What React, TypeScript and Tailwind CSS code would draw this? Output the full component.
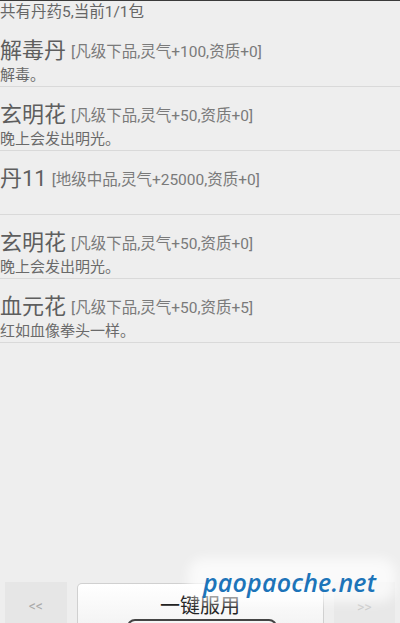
import React from "react";

const items = [
  { name: "解毒丹", info: "[凡级下品,灵气+100,资质+0]", desc: "解毒。" },
  { name: "玄明花", info: "[凡级下品,灵气+50,资质+0]", desc: "晚上会发出明光。" },
  { name: "丹11", info: "[地级中品,灵气+25000,资质+0]", desc: "" },
  { name: "玄明花", info: "[凡级下品,灵气+50,资质+0]", desc: "晚上会发出明光。" },
  { name: "血元花", info: "[凡级下品,灵气+50,资质+5]", desc: "红如血像拳头一样。" },
];

const font = { fontFamily: '"Roboto", "Noto Sans CJK SC", sans-serif' };

export default function App() {
  return (
    <div className="relative w-[400px] h-[623px] overflow-hidden bg-[#eeeeee] flex flex-col" style={font}>
      <div className="h-[1px] bg-[#3a3a3a]" />
      <div className="h-[21px] flex items-center text-[15.5px] leading-none text-[#666] mt-[1px]">
        共有丹药5,当前1/1包
      </div>
      <div className="flex flex-col">
        {items.map((it, i) => (
          <div key={i} className="h-[64px] border-b border-[#d9d9d9] flex flex-col">
            <div className="mt-[14px] h-[28px] flex items-center whitespace-nowrap">
              <span className="text-[22px] leading-none text-[#5e5e5e]">{it.name}</span>
              <span className="ml-[5px] text-[15.5px] leading-none text-[#7a7a7a] mt-[3px]">{it.info}</span>
            </div>
            <div className="h-[18px] flex items-center text-[15px] leading-none text-[#6a6a6a] mt-[1px]">{it.desc}</div>
          </div>
        ))}
      </div>
      <div className="flex-1" />
      <div className="h-[41px] flex items-start gap-[10px] px-[5px]">
        <div className="w-[62px] h-[41px] bg-[#e6e6e6] flex items-center justify-center text-[14px] text-[#aaa] pt-[8px]">&lt;&lt;</div>
        <div className="w-[249px] h-[41px] mt-[1px] rounded-tl-[5px] rounded-tr-[3px] border border-b-0 border-[#d0d0d0] bg-gradient-to-b from-white to-[#f4f4f4] flex items-start justify-center pt-[12px] text-[20px] leading-none text-[#222]">
          一键服用
        </div>
        <div className="w-[62px] h-[41px] bg-[#e8e8e8] flex items-center justify-center text-[14px] text-[#c8c8c8] pt-[10px]">&gt;&gt;</div>
      </div>
      <div className="absolute left-[127px] top-[619px] w-[150px] h-[20px] rounded-[8px] border-2 border-[#444] bg-[#f5f5f5]" />
      <div className="absolute left-[188px] top-[558px] w-[208px] h-[44px] rounded-[16px] bg-white/70 blur-[6px]" />
      <div
        className="absolute left-[203px] top-[566px] text-[25px] leading-[32px] italic font-semibold text-[#1d74b9] tracking-[0.2px]"
        style={{ fontFamily: '"Open Sans", "Liberation Sans", sans-serif' }}
      >
        paopaoche.net
      </div>
    </div>
  );
}
